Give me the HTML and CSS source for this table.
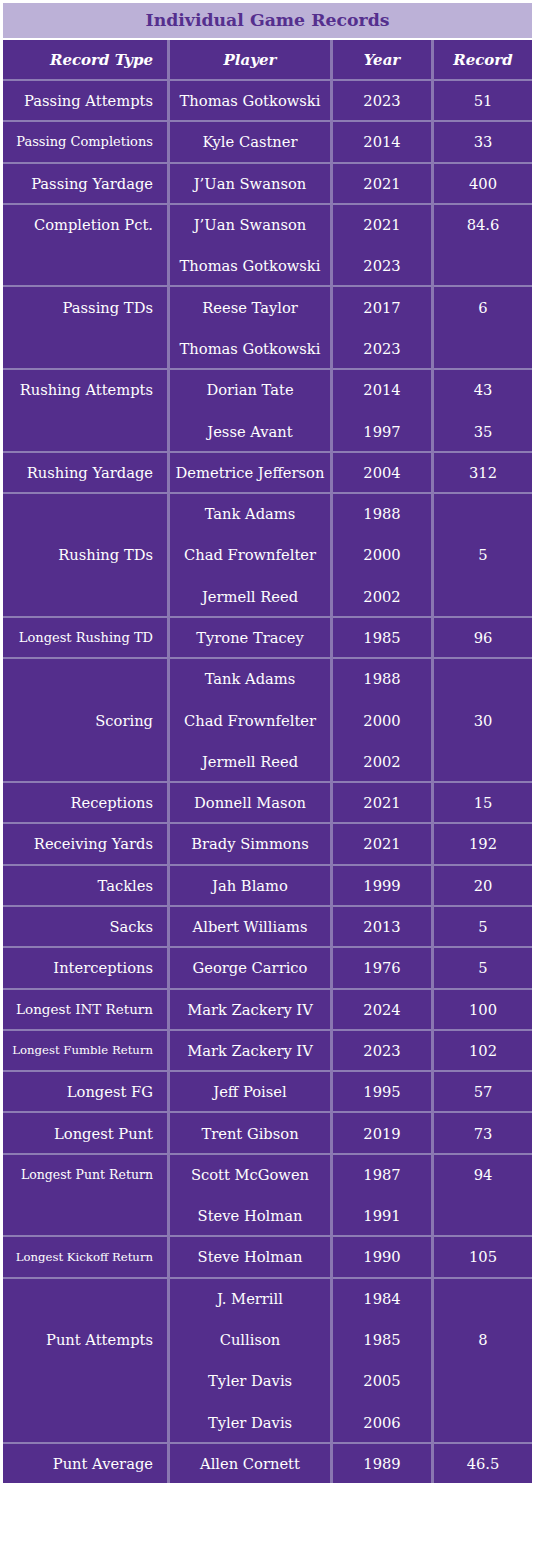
FILE: index.html
```html
<!DOCTYPE html>
<html lang="en">
<head>
  <meta charset="UTF-8" />
  <title>Individual Game Records</title>
  <link rel="stylesheet" href="styles.css">
</head>
<body>

<div class="records">
  <div class="records-title">Individual Game Records</div>
  <table class="records-table">
    <colgroup>
      <col class="c-type">
      <col class="c-player">
      <col class="c-year">
      <col class="c-record">
    </colgroup>
    <thead>
      <tr>
        <th class="type">Record Type</th>
        <th>Player</th>
        <th>Year</th>
        <th>Record</th>
      </tr>
    </thead>
    <tbody>
      <tr class="start"><td class="type">Passing Attempts</td><td>Thomas Gotkowski</td><td>2023</td><td>51</td></tr>
      <tr class="start"><td class="type sm">Passing Completions</td><td>Kyle Castner</td><td>2014</td><td>33</td></tr>
      <tr class="start"><td class="type">Passing Yardage</td><td>J’Uan Swanson</td><td>2021</td><td>400</td></tr>

      <tr class="start"><td class="type">Completion Pct.</td><td>J’Uan Swanson</td><td>2021</td><td>84.6</td></tr>
      <tr><td class="type"></td><td>Thomas Gotkowski</td><td>2023</td><td></td></tr>

      <tr class="start"><td class="type">Passing TDs</td><td>Reese Taylor</td><td>2017</td><td>6</td></tr>
      <tr><td class="type"></td><td>Thomas Gotkowski</td><td>2023</td><td></td></tr>

      <tr class="start"><td class="type">Rushing Attempts</td><td>Dorian Tate</td><td>2014</td><td>43</td></tr>
      <tr><td class="type"></td><td>Jesse Avant</td><td>1997</td><td>35</td></tr>

      <tr class="start"><td class="type">Rushing Yardage</td><td>Demetrice Jefferson</td><td>2004</td><td>312</td></tr>

      <tr class="start"><td class="type"></td><td>Tank Adams</td><td>1988</td><td></td></tr>
      <tr><td class="type">Rushing TDs</td><td>Chad Frownfelter</td><td>2000</td><td>5</td></tr>
      <tr><td class="type"></td><td>Jermell Reed</td><td>2002</td><td></td></tr>

      <tr class="start"><td class="type sm">Longest Rushing TD</td><td>Tyrone Tracey</td><td>1985</td><td>96</td></tr>

      <tr class="start"><td class="type"></td><td>Tank Adams</td><td>1988</td><td></td></tr>
      <tr><td class="type">Scoring</td><td>Chad Frownfelter</td><td>2000</td><td>30</td></tr>
      <tr><td class="type"></td><td>Jermell Reed</td><td>2002</td><td></td></tr>

      <tr class="start"><td class="type">Receptions</td><td>Donnell Mason</td><td>2021</td><td>15</td></tr>
      <tr class="start"><td class="type">Receiving Yards</td><td>Brady Simmons</td><td>2021</td><td>192</td></tr>
      <tr class="start"><td class="type">Tackles</td><td>Jah Blamo</td><td>1999</td><td>20</td></tr>
      <tr class="start"><td class="type">Sacks</td><td>Albert Williams</td><td>2013</td><td>5</td></tr>
      <tr class="start"><td class="type">Interceptions</td><td>George Carrico</td><td>1976</td><td>5</td></tr>
      <tr class="start"><td class="type md">Longest INT Return</td><td>Mark Zackery IV</td><td>2024</td><td>100</td></tr>
      <tr class="start"><td class="type xxs">Longest Fumble Return</td><td>Mark Zackery IV</td><td>2023</td><td>102</td></tr>
      <tr class="start"><td class="type">Longest FG</td><td>Jeff Poisel</td><td>1995</td><td>57</td></tr>
      <tr class="start"><td class="type">Longest Punt</td><td>Trent Gibson</td><td>2019</td><td>73</td></tr>

      <tr class="start"><td class="type xs">Longest Punt Return</td><td>Scott McGowen</td><td>1987</td><td>94</td></tr>
      <tr><td class="type"></td><td>Steve Holman</td><td>1991</td><td></td></tr>

      <tr class="start"><td class="type xxs">Longest Kickoff Return</td><td>Steve Holman</td><td>1990</td><td>105</td></tr>

      <tr class="start"><td class="type"></td><td>J. Merrill</td><td>1984</td><td></td></tr>
      <tr><td class="type">Punt Attempts</td><td>Cullison</td><td>1985</td><td>8</td></tr>
      <tr><td class="type"></td><td>Tyler Davis</td><td>2005</td><td></td></tr>
      <tr><td class="type"></td><td>Tyler Davis</td><td>2006</td><td></td></tr>

      <tr class="start"><td class="type">Punt Average</td><td>Allen Cornett</td><td>1989</td><td>46.5</td></tr>
    </tbody>
  </table>
</div>

</body>
</html>
```

FILE: styles.css
```css
body {
  margin: 0;
  padding: 3px;
  background: #fff;
  font-family: 'DejaVu Serif', serif;
}

.records {
  width: 529px;
}

.records-title {
  height: 35px;
  line-height: 35px;
  background: #bcb1d7;
  color: #552f8e;
  font-size: 17.3px;
  font-weight: bold;
  text-align: center;
  margin-bottom: 2px;
}

.records-table {
  width: 529px;
  table-layout: fixed;
  border-collapse: separate;
  border-spacing: 0;
  background: #542e8c;
  color: #fff;
  font-size: 14.7px;
}

.c-type { width: 167px; }
.c-player { width: 163px; }
.c-year { width: 101px; }
.c-record { width: 98px; }

.records-table th,
.records-table td {
  padding: 0;
  text-align: center;
  vertical-align: middle;
  white-space: nowrap;
  border-right: 3px solid #8a77b1;
}

.records-table th:last-child,
.records-table td:last-child {
  border-right: none;
}

.records-table th {
  height: 39px;
  font-weight: bold;
  font-style: italic;
  font-size: 15px;
}

.records-table td {
  height: 39.3px;
  padding-top: 2px;
}

.records-table tr.start td {
  padding-top: 0;
  border-top: 2px solid #8d7cb4;
}

.records-table .type {
  text-align: right;
  padding-right: 14px;
}

.records-table .md { font-size: 13.5px; }
.records-table .sm { font-size: 13px; }
.records-table .xs { font-size: 12.5px; }
.records-table .xxs { font-size: 11.7px; }
```
